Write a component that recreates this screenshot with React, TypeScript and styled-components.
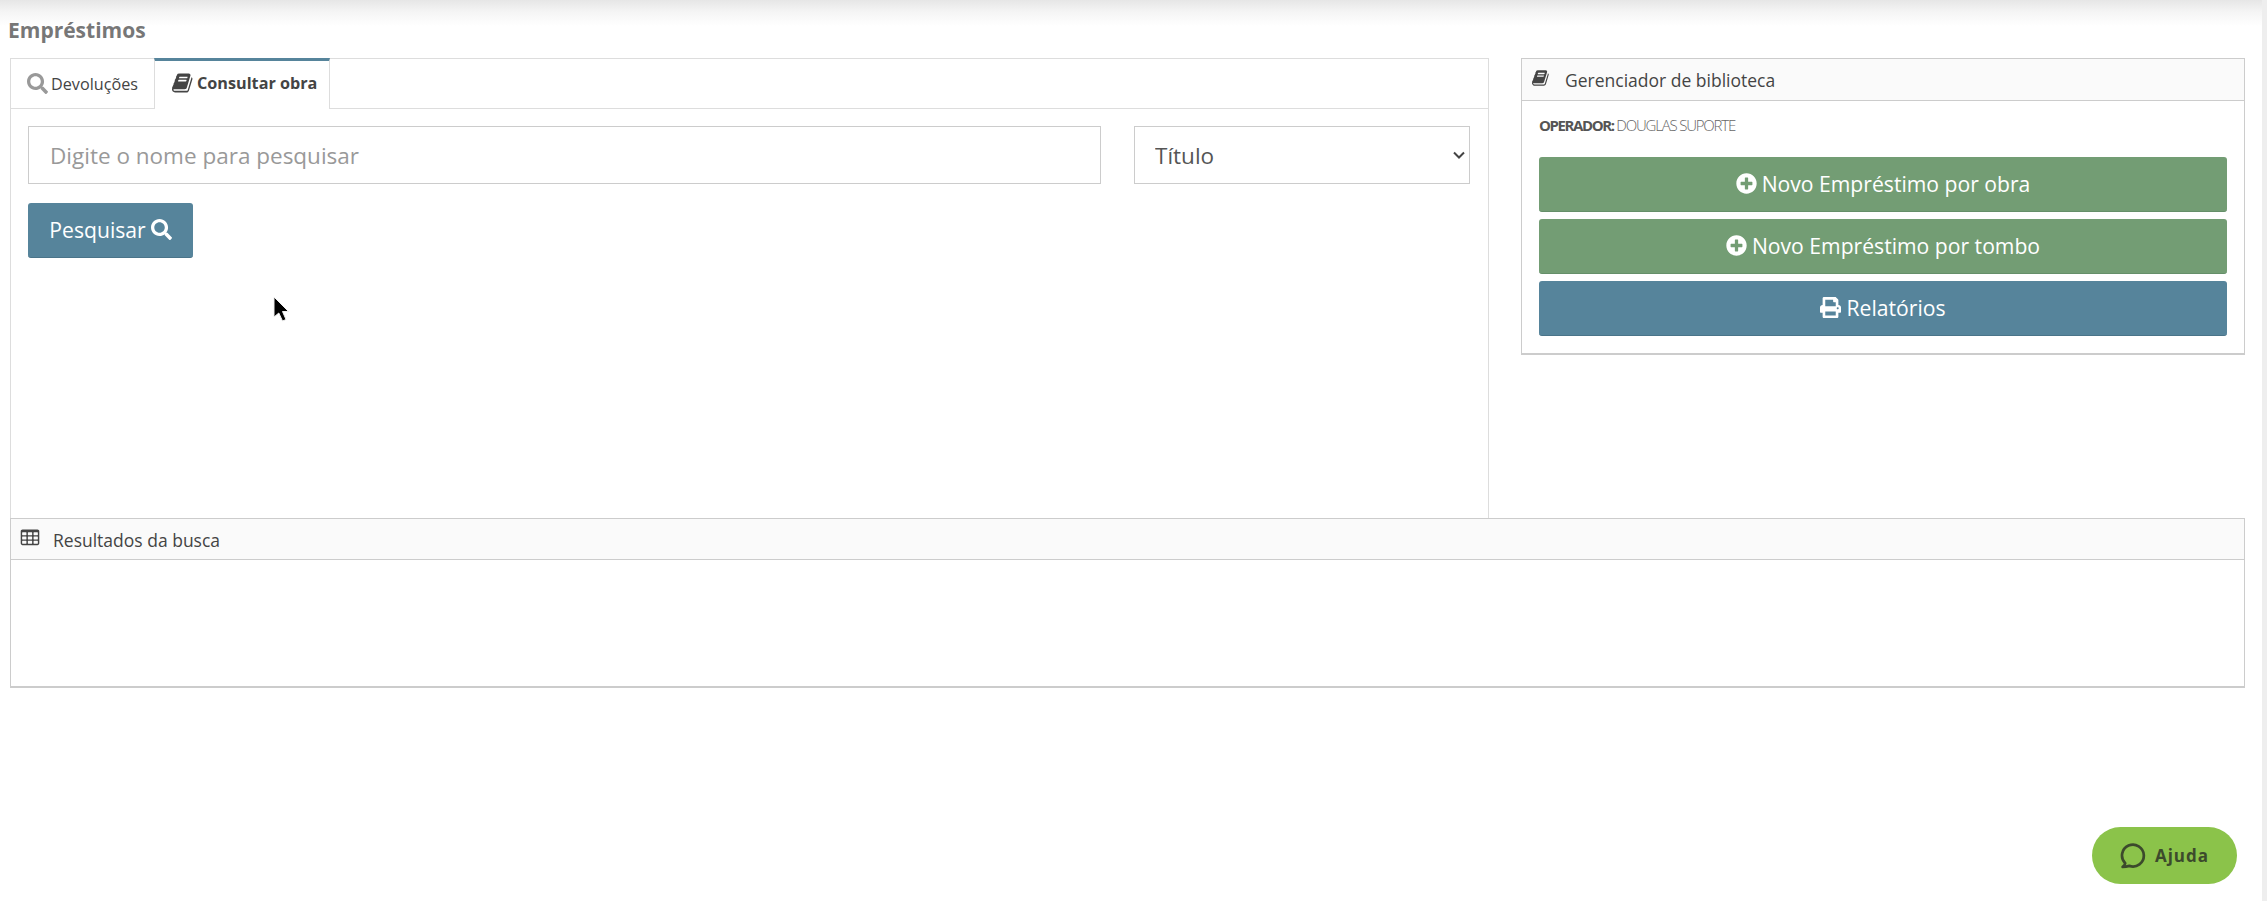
import React from "react";
import styled, { createGlobalStyle } from "styled-components";
import { FaSearch, FaPlusCircle, FaPrint } from "react-icons/fa";

const Global = createGlobalStyle`
  html, body { margin: 0; padding: 0; background: #fff; overflow: hidden; }
  body { font-family: "Open Sans", "Noto Sans", sans-serif; color: #333; }
  * { box-sizing: border-box; }
`;

const BOOK = "M1639 478q40 57 18 129l-275 906q-19 64-76.5 107.5t-122.5 43.5h-923q-77 0-148.5-53.5t-99.5-131.5q-24-67-2-127 0-4 3-27t4-37q1-8-3-21.5t-3-19.5q2-11 8-21t16.5-23.5 16.5-23.5q23-38 45-91.5t30-91.5q3-10 .5-30t-.5-28q3-11 17-28t17-23q21-36 42-92t25-90q1-9-2.5-32t.5-28q4-13 22-30.5t22-22.5q19-26 42.5-84.5t27.5-96.5q1-8-3-25.5t-2-26.5q2-8 9-18t18-23 17-21q8-12 16.5-30.5t15-35 16-36 19.5-32 26.5-23.5 36-11.5 47.5 5.5l-1 3q38-9 51-9h761q74 0 114 56t18 130l-274 906q-36 119-71.5 153.5t-128.5 34.5h-869q-27 0-38 15-11 16-1 43 24 70 144 70h923q29 0 56-15.5t35-41.5l300-987q7-22 5-57 38 15 59 43zm-1064 2q-4 13 2 22.5t20 9.5h608q13 0 25.5-9.5t16.5-22.5l21-64q4-13-2-22.5t-20-9.5h-608q-13 0-25.5 9.5t-16.5 22.5zm-83 256q-4 13 2 22.5t20 9.5h608q13 0 25.5-9.5t16.5-22.5l21-64q4-13-2-22.5t-20-9.5h-608q-13 0-25.5 9.5t-16.5 22.5z";
const TABLE = "M576 1376v-192q0-14-9-23t-23-9h-320q-14 0-23 9t-9 23v192q0 14 9 23t23 9h320q14 0 23-9t9-23zm0-384v-192q0-14-9-23t-23-9h-320q-14 0-23 9t-9 23v192q0 14 9 23t23 9h320q14 0 23-9t9-23zm512 384v-192q0-14-9-23t-23-9h-320q-14 0-23 9t-9 23v192q0 14 9 23t23 9h320q14 0 23-9t9-23zm-512-768v-192q0-14-9-23t-23-9h-320q-14 0-23 9t-9 23v192q0 14 9 23t23 9h320q14 0 23-9t9-23zm512 384v-192q0-14-9-23t-23-9h-320q-14 0-23 9t-9 23v192q0 14 9 23t23 9h320q14 0 23-9t9-23zm512 384v-192q0-14-9-23t-23-9h-320q-14 0-23 9t-9 23v192q0 14 9 23t23 9h320q14 0 23-9t9-23zm-512-768v-192q0-14-9-23t-23-9h-320q-14 0-23 9t-9 23v192q0 14 9 23t23 9h320q14 0 23-9t9-23zm512 384v-192q0-14-9-23t-23-9h-320q-14 0-23 9t-9 23v192q0 14 9 23t23 9h320q14 0 23-9t9-23zm0-384v-192q0-14-9-23t-23-9h-320q-14 0-23 9t-9 23v192q0 14 9 23t23 9h320q14 0 23-9t9-23zm128-320v1088q0 66-47 113t-113 47h-1344q-66 0-113-47t-47-113v-1088q0-66 47-113t113-47h1344q66 0 113 47t47 113z";

const Glyph = ({ d, size }: { d: string; size: number }) => (
  <svg width={size} height={size} viewBox="0 0 1792 1792" fill="currentColor"><path d={d} /></svg>
);

const Page = styled.div`
  display: flex;
  width: 2267px;
  height: 901px;
`;
const Content = styled.main`
  flex: 1;
  min-width: 0;
`;
const Scrollbar = styled.div`
  width: 5px;
  background: #eeeeee;
`;
const Title = styled.h1`
  margin: 0;
  height: 58px;
  padding: 18px 0 0 8px;
  font-size: 21px;
  line-height: 24px;
  font-weight: 700;
  color: #777777;
  background: linear-gradient(to bottom, #e6e6e6 0, #f5f5f5 12px, #ffffff 26px) no-repeat;
`;
const TopRow = styled.div`
  display: grid;
  grid-template-columns: 1479px 724px;
  column-gap: 32px;
  padding-left: 10px;
  align-items: start;
`;
const TabPanel = styled.section`
  height: 460px;
  border: 1px solid #dddddd;
  border-bottom: 0;
`;
const TabBar = styled.div`
  display: flex;
  height: 50px;
  border-bottom: 1px solid #dddddd;
`;
const Tab = styled.div<{ $active?: boolean }>`
  display: flex;
  align-items: center;
  gap: 3px;
  height: ${(p) => (p.$active ? "51px" : "49px")};
  margin-top: ${(p) => (p.$active ? "-1px" : "0")};
  width: ${(p) => (p.$active ? "176px" : "143px")};
  padding-left: ${(p) => (p.$active ? "17px" : "16px")};
  padding-bottom: ${(p) => (p.$active ? "5px" : "0")};
  font-size: 16.2px;
  font-weight: ${(p) => (p.$active ? 700 : 400)};
  color: #444;
  background: #fff;
  border-top: ${(p) => (p.$active ? "3px solid #56849b" : "0")};
  border-left: ${(p) => (p.$active ? "1px solid #dddddd" : "0")};
  border-right: ${(p) => (p.$active ? "1px solid #dddddd" : "0")};
  svg {
    flex: none;
    color: ${(p) => (p.$active ? "#444" : "#999")};
  }
`;
const TabBody = styled.div`
  padding: 17px 18px 0 17px;
`;
const SearchRow = styled.div`
  display: grid;
  grid-template-columns: 1073px 336px;
  column-gap: 33px;
`;
const TextInput = styled.input`
  height: 58px;
  padding: 0 21px;
  border: 1px solid #cccccc;
  border-radius: 0;
  outline: 0;
  font-family: inherit;
  font-size: 22.5px;
  color: #555;
  &::placeholder { color: #999; opacity: 1; }
`;
const Select = styled.select`
  height: 58px;
  padding: 0 20px;
  border: 1px solid #cccccc;
  border-radius: 0;
  appearance: none;
  background: #fff url("data:image/svg+xml,%3Csvg xmlns='http://www.w3.org/2000/svg' width='12' height='8' viewBox='0 0 12 8'%3E%3Cpath d='M1 1.5 L6 6.5 L11 1.5' fill='none' stroke='%23444' stroke-width='2'/%3E%3C/svg%3E") no-repeat right 4px center;
  font-family: inherit;
  font-size: 22.5px;
  color: #555;
`;
const Button = styled.button<{ $tone: "blue" | "green"; $wide?: boolean }>`
  display: flex;
  align-items: center;
  justify-content: center;
  gap: 5px;
  height: 55px;
  width: ${(p) => (p.$wide ? "100%" : "165px")};
  border: 0;
  border-bottom: 1px solid ${(p) => (p.$tone === "blue" ? "#4a7489" : "#658f69")};
  border-radius: 3px;
  background: ${(p) => (p.$tone === "blue" ? "#56849b" : "#739d74")};
  color: #fff;
  font-family: inherit;
  font-size: 21.15px;
  padding: 0 0 2px;
  svg { font-size: 21px; }
`;
const SearchButton = styled(Button)`
  margin-top: 19px;
`;
const Card = styled.section`
  border: 1px solid #cccccc;
  border-bottom-width: 2px;
  background: #fff;
`;
const CardHead = styled.header`
  display: flex;
  align-items: center;
  height: 42px;
  padding-left: 10px;
  gap: 15px;
  font-size: 17.5px;
  background: #fafafa;
  border-bottom: 1px solid #cccccc;
  color: #444;
  svg { flex: none; margin-top: -3px; }
`;
const ResultsHead = styled(CardHead)`
  height: 41px;
  gap: 13px;
  padding: 1px 0 0 9px;
`;
const SideBody = styled.div`
  padding: 0 17px 17px;
`;
const Operator = styled.p`
  margin: 0;
  height: 56px;
  padding-top: 14px;
  font-size: 15px;
  line-height: 20px;
  letter-spacing: -1.2px;
  font-weight: 300;
  color: #666;
  b { font-weight: 700; color: #555; letter-spacing: -1.4px; }
`;
const ActionStack = styled.div`
  display: flex;
  flex-direction: column;
  gap: 7px;
`;
const Results = styled(Card)`
  margin-left: 10px;
  width: 2235px;
  height: 170px;
`;
const Help = styled.button`
  position: fixed;
  left: 2092px;
  top: 827px;
  width: 145px;
  height: 57px;
  display: flex;
  align-items: center;
  justify-content: center;
  gap: 9px;
  border: 0;
  border-radius: 29px;
  background: #8bc34a;
  color: #3c4a2c;
  font-family: "Open Sans", sans-serif;
  font-size: 17px;
  font-weight: 700;
  letter-spacing: 1px;
`;
const Cursor = styled.svg`
  position: fixed;
  left: 273px;
  top: 296px;
  width: 18px;
  height: 27px;
`;

export default function App() {
  return (
    <Page>
      <Global />
      <Content>
        <Title>Empréstimos</Title>
        <TopRow>
          <TabPanel>
            <TabBar>
              <Tab><FaSearch size={21} />Devoluções</Tab>
              <Tab $active><Glyph d={BOOK} size={22} />Consultar obra</Tab>
            </TabBar>
            <TabBody>
              <SearchRow>
                <TextInput placeholder="Digite o nome para pesquisar" />
                <Select defaultValue="titulo"><option value="titulo">Título</option></Select>
              </SearchRow>
              <SearchButton $tone="blue">Pesquisar <FaSearch /></SearchButton>
            </TabBody>
          </TabPanel>
          <Card>
            <CardHead><Glyph d={BOOK} size={18} />Gerenciador de biblioteca</CardHead>
            <SideBody>
              <Operator><b>OPERADOR:</b> DOUGLAS SUPORTE</Operator>
              <ActionStack>
                <Button $tone="green" $wide><FaPlusCircle />Novo Empréstimo por obra</Button>
                <Button $tone="green" $wide><FaPlusCircle />Novo Empréstimo por tombo</Button>
                <Button $tone="blue" $wide><FaPrint />Relatórios</Button>
              </ActionStack>
            </SideBody>
          </Card>
        </TopRow>
        <Results>
          <ResultsHead><Glyph d={TABLE} size={20} />Resultados da busca</ResultsHead>
        </Results>
      </Content>
      <Scrollbar />
      <Cursor viewBox="0 0 18 27">
        <path d="M1 1 L1 21 L5.8 17 L9.5 25 L13 23.5 L9.5 15.5 L15.5 15.5 Z" fill="#000" stroke="#eee" strokeWidth="1" />
      </Cursor>
      <Help>
        <svg width="26" height="27" viewBox="0 0 25 26" fill="none" stroke="#3c4a2c" strokeWidth="2.6">
          <path d="M5 20.5 A10.5 10.5 0 1 1 9 23 C7 23.6 5 24 2.5 24 C4 23 4.8 22 5 20.5 Z" strokeLinejoin="round" />
        </svg>
        Ajuda
      </Help>
    </Page>
  );
}
